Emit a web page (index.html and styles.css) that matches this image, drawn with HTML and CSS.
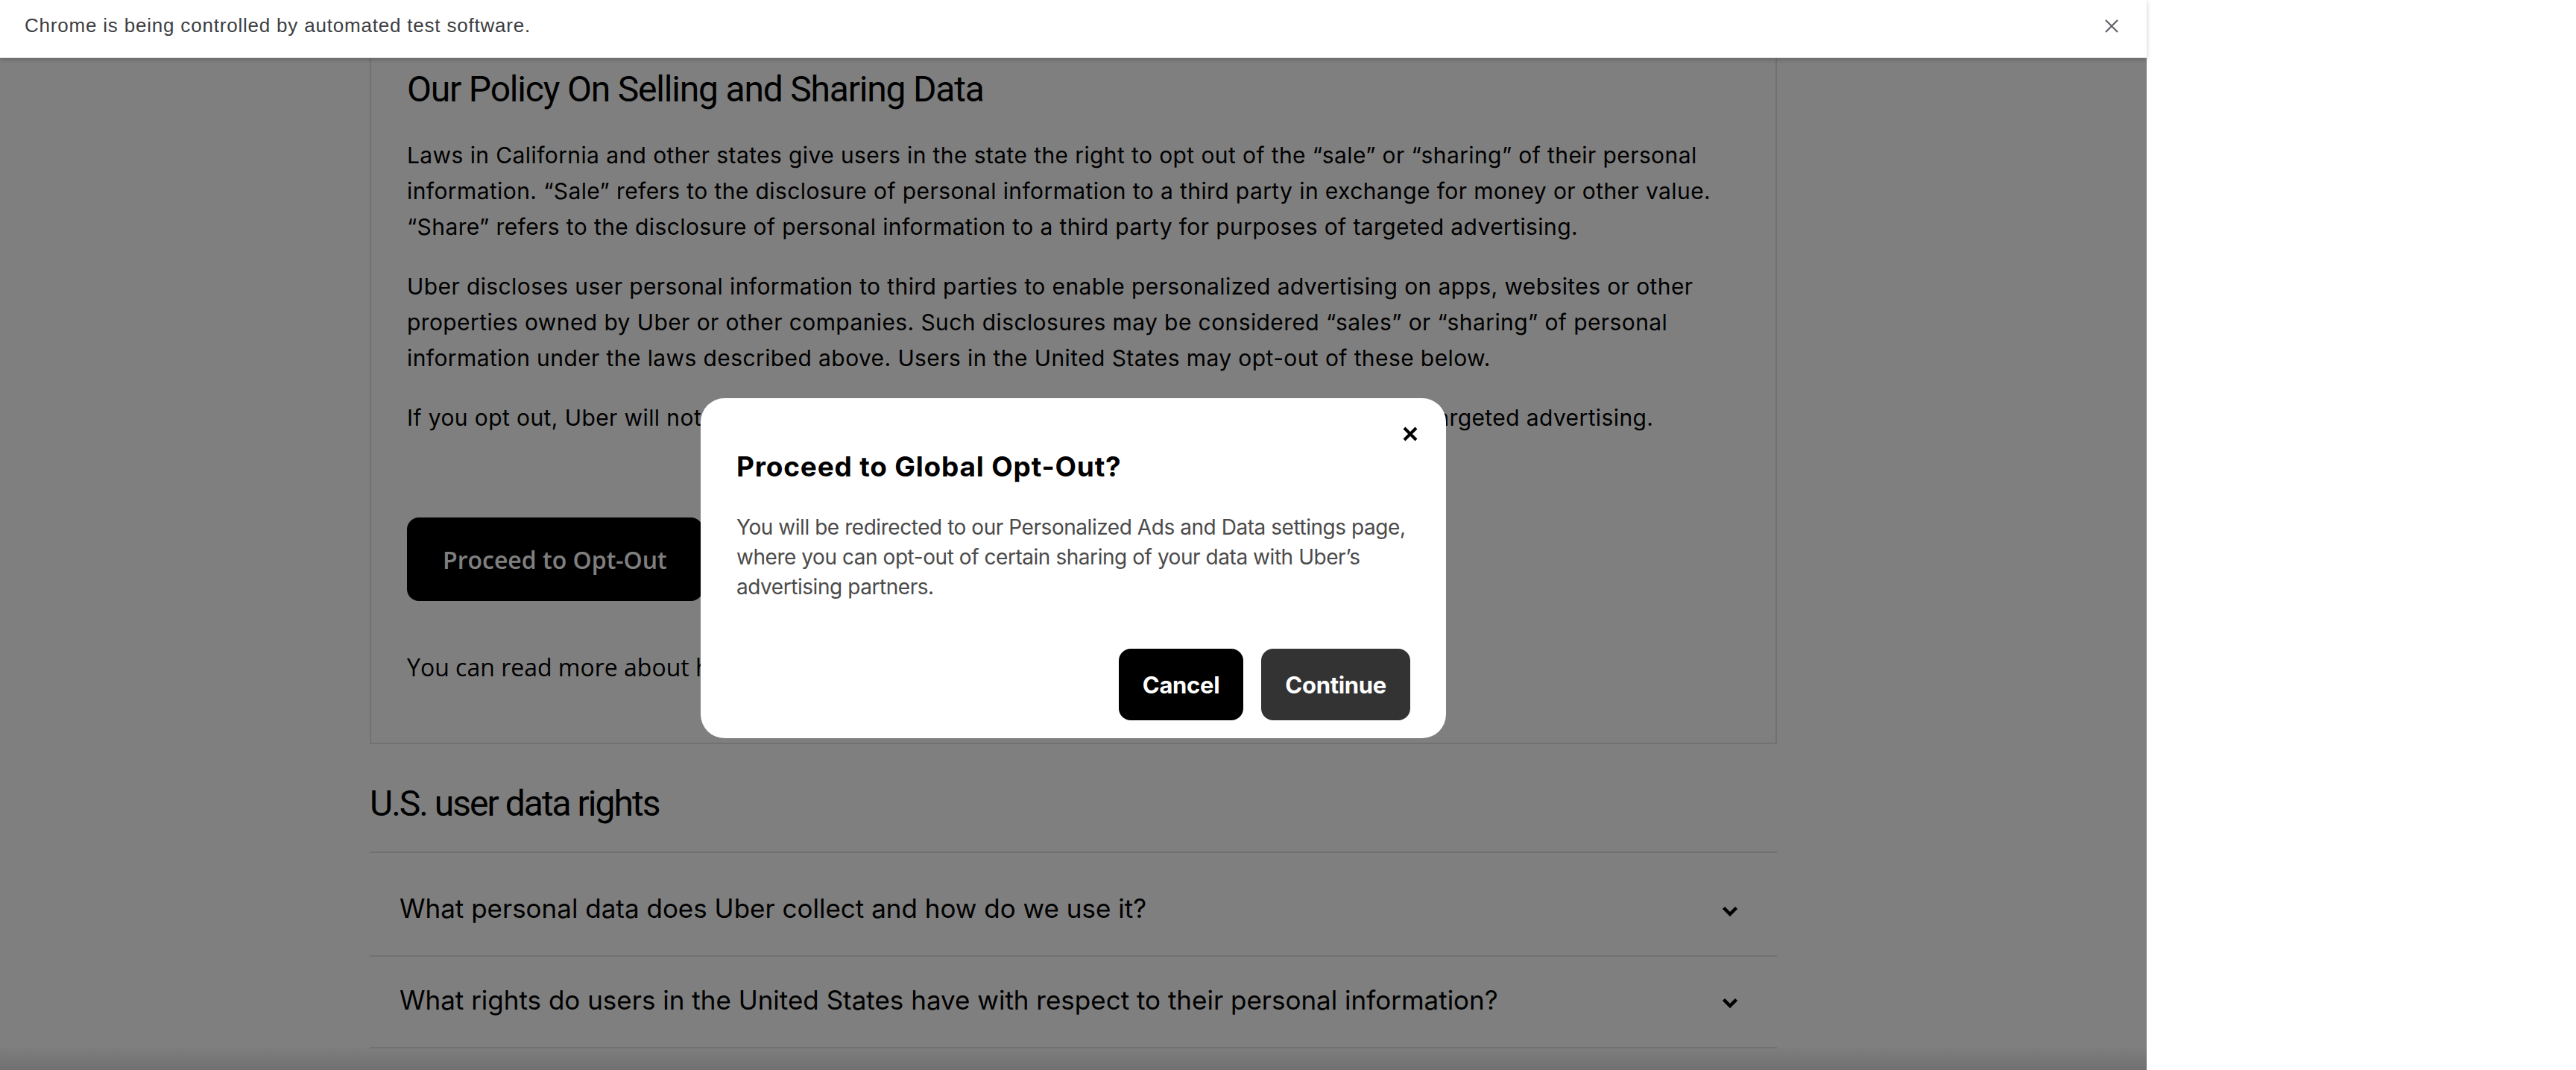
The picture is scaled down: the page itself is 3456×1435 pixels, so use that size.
FILE: index.html
```html
<!DOCTYPE html>
<html lang="en">
<head>
<meta charset="utf-8">
<title>Uber Privacy – Opt-Out</title>
<link rel="stylesheet" href="styles.css">
</head>
<body>
<div class="window">
  <div class="infobar">
    <span class="infobar-text">Chrome is being controlled by automated test software.</span>
    <button class="infobar-close" aria-label="Close">
      <svg width="20" height="20" viewBox="0 0 20 20"><path d="M2 2L18 18M18 2L2 18" stroke="#5f6368" stroke-width="2.2" fill="none"/></svg>
    </button>
  </div>
  <div class="viewport">
    <main class="page">
      <section class="card">
        <h2 class="card-title">Our Policy On Selling and Sharing Data</h2>
        <p class="card-text">Laws in California and other states give users in the state the right to opt out of the “sale” or “sharing” of their personal information. “Sale” refers to the disclosure of personal information to a third party in exchange for money or other value. “Share” refers to the disclosure of personal information to a third party for purposes of targeted advertising.</p>
        <p class="card-text">Uber discloses user personal information to third parties to enable personalized advertising on apps, websites or other properties owned by Uber or other companies. Such disclosures may be considered “sales” or “sharing” of personal information under the laws described above. Users in the United States may opt-out of these below.</p>
        <p class="card-text">If you opt out, Uber will not disclose your personal information to third parties for purposes of targeted advertising.</p>
        <div class="card-actions">
          <button class="btn-primary">Proceed to Opt-Out</button>
        </div>
        <p class="card-note">You can read more about how Uber uses your data here.</p>
      </section>

      <h2 class="section-title">U.S. user data rights</h2>
      <ul class="accordion">
        <li class="accordion-item">
          <span class="accordion-label">What personal data does Uber collect and how do we use it?</span>
          <svg class="chevron" width="22" height="14" viewBox="0 0 22 14"><path d="M2.5 2.5L11 11L19.5 2.5" stroke="#000" stroke-width="4.5" fill="none"/></svg>
        </li>
        <li class="accordion-item">
          <span class="accordion-label">What rights do users in the United States have with respect to their personal information?</span>
          <svg class="chevron" width="22" height="14" viewBox="0 0 22 14"><path d="M2.5 2.5L11 11L19.5 2.5" stroke="#000" stroke-width="4.5" fill="none"/></svg>
        </li>
      </ul>
    </main>

    <div class="overlay">
      <div class="modal" role="dialog" aria-labelledby="modal-title">
        <button class="modal-close" aria-label="Close">
          <svg width="22" height="20" viewBox="0 0 22 20"><path d="M3 2L19 18M19 2L3 18" stroke="#000" stroke-width="4" fill="none"/></svg>
        </button>
        <h3 class="modal-title" id="modal-title">Proceed to Global Opt-Out?</h3>
        <p class="modal-text">You will be redirected to our Personalized Ads and Data settings page, where you can opt-out of certain sharing of your data with Uber’s advertising partners.</p>
        <div class="modal-actions">
          <button class="btn btn-cancel">Cancel</button>
          <button class="btn btn-continue">Continue</button>
        </div>
      </div>
    </div>
  </div>
</div>
</body>
</html>
```

FILE: styles.css
```css
* { box-sizing: border-box; }

body {
  margin: 0;
  width: 3456px;
  height: 1435px;
  overflow: hidden;
  background: #ffffff;
}

.window {
  width: 2880px;
  height: 1435px;
  display: flex;
  flex-direction: column;
}

/* Chrome automation infobar */
.infobar {
  position: relative;
  z-index: 3;
  height: 78px;
  flex: 0 0 78px;
  display: flex;
  align-items: center;
  justify-content: space-between;
  padding: 0 37px 8px 33px;
  background: #ffffff;
  border-bottom: 1px solid #d6d6d6;
  box-shadow: 0 2px 6px rgba(0, 0, 0, 0.22);
}

.infobar-text {
  font-family: "Liberation Sans", Arial, sans-serif;
  font-size: 26px;
  letter-spacing: 0.8px;
  color: #3c4043;
}

.infobar-close {
  display: flex;
  padding: 0;
  border: 0;
  background: none;
}

/* page viewport */
.viewport {
  position: relative;
  flex: 1;
  overflow: hidden;
  background: #ffffff;
}

.page {
  width: 1888px;
  margin: -40px auto 0;
  font-family: Inter, "Liberation Sans", sans-serif;
  color: #000000;
}

.card {
  border: 2px solid #e2e2e2;
  padding: 48px 24px 77px 48px;
}

.card-title {
  margin: 0 0 32px;
  font-family: Roboto, "Liberation Sans", sans-serif;
  font-size: 48px;
  line-height: 64px;
  font-weight: 400;
  letter-spacing: -1.2px;
}

.card-text {
  margin: 0 0 32px;
  font-size: 30px;
  line-height: 48px;
  letter-spacing: 0.4px;
}

.card-actions {
  margin-top: 110px;
  display: flex;
}

.btn-primary {
  height: 112px;
  padding: 0 48px;
  border: 0;
  border-radius: 16px;
  background: #000000;
  color: #ffffff;
  font-family: "Open Sans", sans-serif;
  font-size: 32px;
  font-weight: 600;
}

.card-note {
  margin: 65px 0 0;
  font-family: "Open Sans", sans-serif;
  font-size: 32px;
  line-height: 48px;
}

.section-title {
  margin: 48px 0 32px;
  font-family: Roboto, "Liberation Sans", sans-serif;
  font-size: 48px;
  line-height: 64px;
  font-weight: 400;
  letter-spacing: -2px;
}

.accordion {
  list-style: none;
  margin: 0;
  padding: 0;
  border-top: 2px solid #e2e2e2;
}

.accordion-item {
  display: flex;
  align-items: center;
  justify-content: space-between;
  padding: 34px 52px 39px 40px;
  border-bottom: 2px solid #e2e2e2;
}

.accordion-item:first-child {
  padding-top: 50px;
}

.accordion-label {
  font-size: 35px;
  line-height: 48px;
}

.chevron {
  margin-top: 7px;
  flex: none;
}

/* modal overlay */
.overlay {
  position: absolute;
  inset: 0;
  display: flex;
  align-items: center;
  justify-content: center;
  padding-top: 11px;
  background: linear-gradient(180deg, rgba(0, 0, 0, 0) calc(100% - 32px), rgba(0, 0, 0, 0.12)), rgba(0, 0, 0, 0.5);
}

.modal {
  position: relative;
  width: 1000px;
  padding: 68px 48px 24px;
  border-radius: 32px;
  background: #ffffff;
  font-family: Inter, "Liberation Sans", sans-serif;
}

.modal-close {
  position: absolute;
  top: 24px;
  right: 24px;
  width: 48px;
  height: 48px;
  display: flex;
  align-items: center;
  justify-content: center;
  padding: 0;
  border: 0;
  background: none;
}

.modal-title {
  margin: 0;
  font-size: 37px;
  line-height: 48px;
  font-weight: 700;
  letter-spacing: 0.8px;
  color: #000000;
}

.modal-text {
  margin: 37px -40px 0 0;
  font-size: 28px;
  line-height: 40px;
  letter-spacing: -0.45px;
  color: #4b4b4b;
}

.modal-actions {
  display: flex;
  justify-content: flex-end;
  gap: 24px;
  margin-top: 63px;
}

.btn {
  height: 96px;
  padding: 0 32px;
  border: 0;
  border-radius: 16px;
  color: #ffffff;
  font-family: Inter, "Liberation Sans", sans-serif;
  font-size: 31px;
  font-weight: 700;
  letter-spacing: -0.3px;
}

.btn-cancel { background: #000000; }
.btn-continue { background: #333333; }
```
